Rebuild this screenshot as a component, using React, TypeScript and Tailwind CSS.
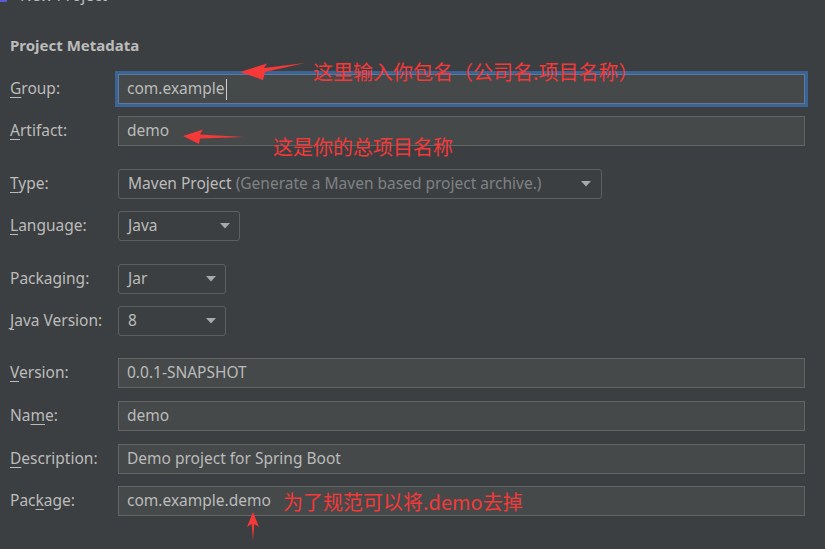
import React from "react";

const U = ({ c }: { c: string }) => (
  <span className="underline decoration-1 underline-offset-[3px]">{c}</span>
);

const Arrow = () => (
  <svg width="10" height="6" viewBox="0 0 10 6" className="shrink-0">
    <polygon points="0,0 10,0 5,5.5" fill="#a9a9a9" />
  </svg>
);

function Label({ children }: { children: React.ReactNode }) {
  return <div className="w-[108px] shrink-0 text-[#bbbbbb]">{children}</div>;
}

function TextField({ value }: { value: string }) {
  return (
    <div className="flex-1 h-[30px] border border-[#646464] bg-[#45494a] flex items-center pl-[8px] text-[#bbbbbb]">
      {value}
    </div>
  );
}

export default function App() {
  return (
    <div
      className="w-[825px] h-[549px] relative overflow-hidden bg-[#3c3f41] text-[15.5px] leading-none"
      style={{ fontFamily: '"Noto Sans", "Noto Sans CJK SC", sans-serif' }}
    >
      <div className="flex flex-col pr-[20px]">
        {/* title bar (cut off) */}
        <div className="flex items-center h-[22px] mt-[-15px] gap-[13px]">
          <div className="w-[8px] h-[12px] border-2 border-[#5b5bd6] bg-[#111] rounded-[1px] ml-[-1px]" />
          <span className="text-[#bbbbbb] text-[15.5px]">New Project</span>
        </div>

        <div className="mt-[28px] h-[20px] flex items-center pl-[10px] font-bold text-[15px] text-[#bbbbbb]">
          Project Metadata
        </div>

        {/* Group */}
        <div className="mt-[19px] flex items-center pl-[10px]">
          <Label>
            <U c="G" />roup:
          </Label>
          <div className="flex-1 h-[30px] border border-[#5a7aa0] bg-[#45494a] flex items-center pl-[8px] text-[#bbbbbb] outline outline-[3px] outline-[#3b6494]">
            com.example
            <span className="inline-block w-px h-[21px] bg-[#cfcfcf] ml-[1px]" />
          </div>
        </div>

        {/* Artifact */}
        <div className="mt-[12px] flex items-center pl-[10px]">
          <Label>
            <U c="A" />rtifact:
          </Label>
          <TextField value="demo" />
        </div>

        {/* Type */}
        <div className="mt-[23px] flex items-center pl-[10px]">
          <Label>
            <U c="T" />ype:
          </Label>
          <div className="w-[484px] h-[30px] border border-[#5e6060] rounded-[3px] flex items-center pl-[9px] pr-[10px]">
            <span className="flex-1 text-[#bbbbbb] whitespace-nowrap">
              Maven Project <span className="text-[#7f8285]">(Generate a Maven based project archive.)</span>
            </span>
            <Arrow />
          </div>
        </div>

        {/* Language */}
        <div className="mt-[12px] flex items-center pl-[10px]">
          <Label>
            <U c="L" />anguage:
          </Label>
          <div className="w-[122px] h-[30px] border border-[#5e6060] rounded-[3px] flex items-center pl-[9px] pr-[9px]">
            <span className="flex-1 text-[#bbbbbb]">Java</span>
            <Arrow />
          </div>
        </div>

        {/* Packaging */}
        <div className="mt-[23px] flex items-center pl-[10px]">
          <Label>Packaging:</Label>
          <div className="w-[108px] h-[30px] border border-[#5e6060] rounded-[3px] flex items-center pl-[9px] pr-[9px]">
            <span className="flex-1 text-[#bbbbbb]">Jar</span>
            <Arrow />
          </div>
        </div>

        {/* Java Version */}
        <div className="mt-[12px] flex items-center pl-[10px]">
          <Label>
            <U c="J" />ava Version:
          </Label>
          <div className="w-[108px] h-[30px] border border-[#5e6060] rounded-[3px] flex items-center pl-[9px] pr-[9px]">
            <span className="flex-1 text-[#bbbbbb]">8</span>
            <Arrow />
          </div>
        </div>

        {/* Version */}
        <div className="mt-[22px] flex items-center pl-[10px]">
          <Label>
            <U c="V" />ersion:
          </Label>
          <TextField value="0.0.1-SNAPSHOT" />
        </div>

        {/* Name */}
        <div className="mt-[13px] flex items-center pl-[10px]">
          <Label>
            Na<U c="m" />e:
          </Label>
          <TextField value="demo" />
        </div>

        {/* Description */}
        <div className="mt-[13px] flex items-center pl-[10px]">
          <Label>
            <U c="D" />escription:
          </Label>
          <TextField value="Demo project for Spring Boot" />
        </div>

        {/* Package */}
        <div className="mt-[12px] flex items-center pl-[10px]">
          <Label>
            Pac<U c="k" />age:
          </Label>
          <TextField value="com.example.demo" />
        </div>
      </div>

      {/* red annotations */}
      <div
        className="absolute left-[313px] top-[61px] text-[20px] text-[#f53838] whitespace-nowrap leading-[22px]"
        style={{ fontFamily: '"Noto Sans CJK SC", "Noto Sans", sans-serif' }}
      >
        这里输入你包名（公司名.项目名称）
      </div>
      <div
        className="absolute left-[273px] top-[136px] text-[20px] text-[#f53838] whitespace-nowrap leading-[22px]"
        style={{ fontFamily: '"Noto Sans CJK SC", "Noto Sans", sans-serif' }}
      >
        这是你的总项目名称
      </div>
      <div
        className="absolute left-[283px] top-[491px] text-[20px] text-[#f53838] whitespace-nowrap leading-[22px]"
        style={{ fontFamily: '"Noto Sans CJK SC", "Noto Sans", sans-serif' }}
      >
        为了规范可以将.demo去掉
      </div>

      <svg className="absolute left-0 top-0 pointer-events-none" width="825" height="549">
        <polygon points="240,72 267,63.5 264,68 305,63 265,72 263,80" fill="#f53838" />
        <polygon points="183,136 203,129.5 200,134.5 245,137 200,138.5 199,144" fill="#f53838" />
        <polygon points="253,512 259,527 254.3,524 253,541 251.7,524 247,527" fill="#f53838" />
      </svg>
    </div>
  );
}
